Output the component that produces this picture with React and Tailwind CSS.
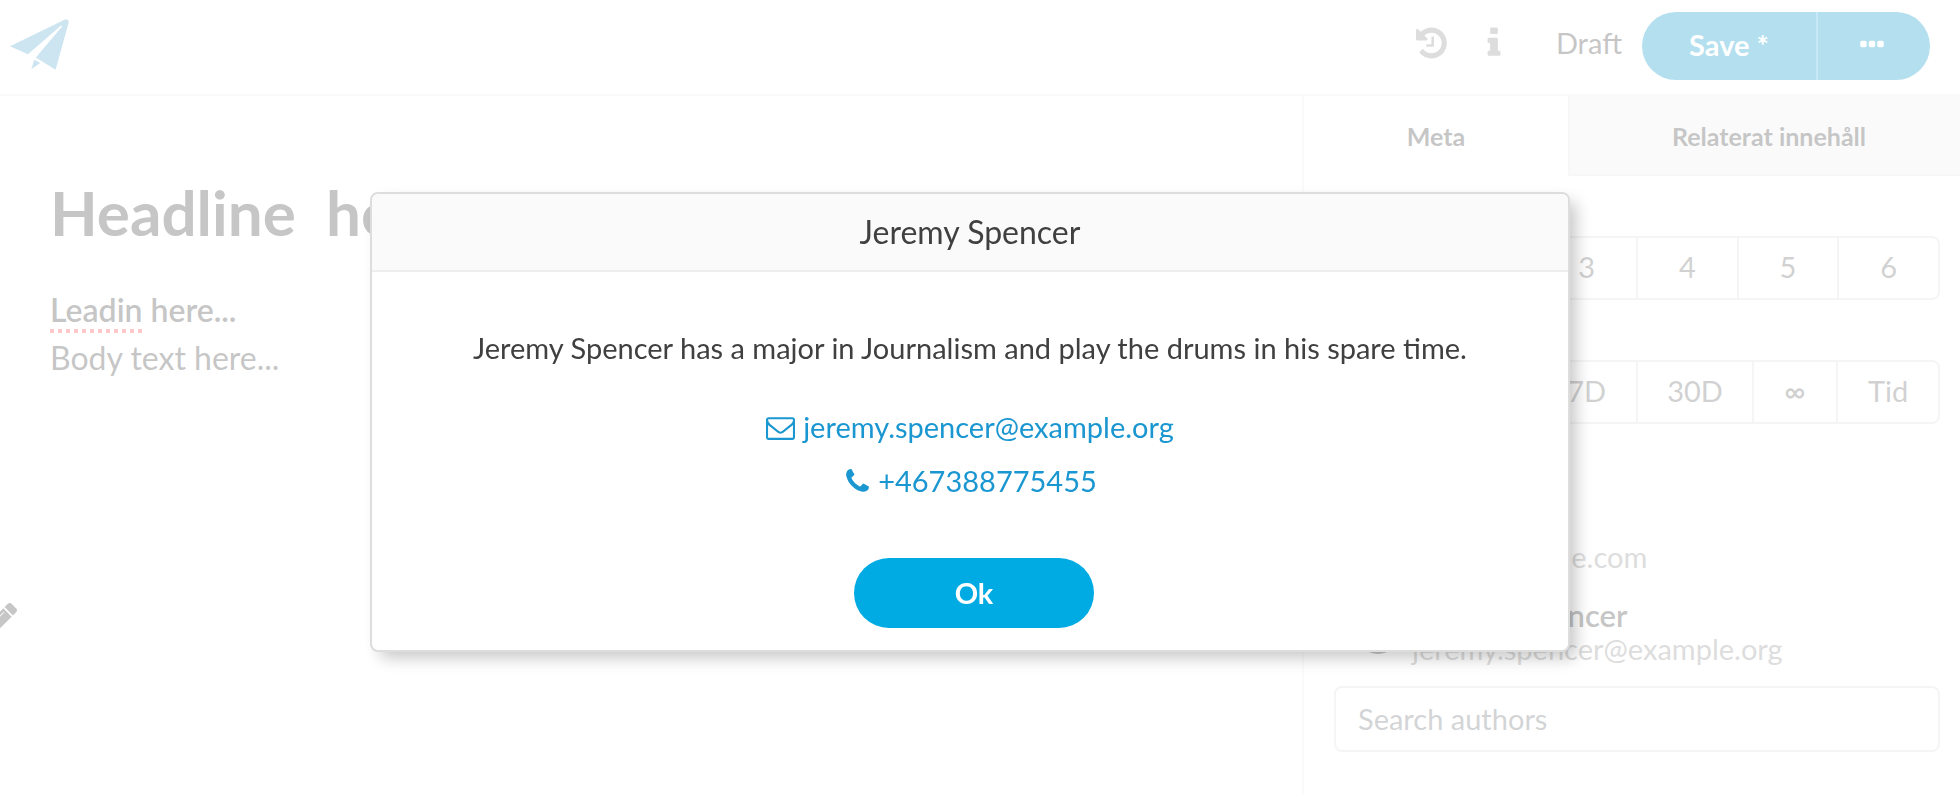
const ICONS = {
  history:
    "M1536 896q0 156-61 298t-164 245-245 164-298 61q-172 0-327-72.5t-264-204.5q-7-10-6.5-22.5t8.5-20.5l137-138q10-9 25-9 16 2 23 12 73 95 179 147t225 52q104 0 198.5-40.5t163.5-109.5 109.5-163.5 40.5-198.5-40.5-198.5-109.5-163.5-163.5-109.5-198.5-40.5q-98 0-188 35.5t-160 101.5l137 138q31 30 14 69-17 40-59 40h-448q-26 0-45-19t-19-45v-448q0-42 40-59 39-17 69 14l130 129q107-101 244.5-156.5t284.5-55.5q156 0 298 61t245 164 164 245 61 298zm-640-288v448q0 14-9 23t-23 9h-320q-14 0-23-9t-9-23v-64q0-14 9-23t23-9h224v-352q0-14 9-23t23-9h64q14 0 23 9t9 23z",
  info: "M1216 1344v128q0 26-19 45t-45 19h-512q-26 0-45-19t-19-45v-128q0-26 19-45t45-19h64v-384h-64q-26 0-45-19t-19-45v-128q0-26 19-45t45-19h384q26 0 45 19t19 45v576h64q26 0 45 19t19 45zm-128-1152v192q0 26-19 45t-45 19h-256q-26 0-45-19t-19-45v-192q0-26 19-45t45-19h256q26 0 45 19t19 45z",
  envelope:
    "M1664 1504v-768q-32 36-69 66-268 206-426 338-51 43-83 67t-86.5 48.5-102.5 24.5h-2q-48 0-102.5-24.5t-86.5-48.5-83-67q-158-132-426-338-37-30-69-66v768q0 13 9.5 22.5t22.5 9.5h1472q13 0 22.5-9.5t9.5-22.5zm0-1051v-24.5l-.5-13-3-12.5-5.5-9-9-7.5-14-2.5h-1472q-13 0-22.5 9.5t-9.5 22.5q0 168 147 284 193 152 401 317 6 5 35 29.5t46 37.5 44.5 31.5 50.5 27.5 43 9h2q20 0 43-9t50.5-27.5 44.5-31.5 46-37.5 35-29.5q208-165 401-317 54-43 100.5-115.5t46.5-131.5zm128-37v1088q0 66-47 113t-113 47h-1472q-66 0-113-47t-47-113v-1088q0-66 47-113t113-47h1472q66 0 113 47t47 113z",
  phone:
    "M1600 1240q0 27-10 70.5t-21 68.5q-21 50-122 106-94 51-186 51-27 0-53-3.5t-57.5-12.5-47-14.5-55.5-20.5-49-18q-98-35-175-83-127-79-264-216t-216-264q-48-77-83-175-3-9-18-49t-20.5-55.5-14.5-47-12.5-57.5-3.5-53q0-92 51-186 56-101 106-122 25-11 68.5-21t70.5-10q14 0 21 3 18 6 53 76 11 19 30 54t35 63.5 31 53.5q3 4 17.5 25t21.5 35.5 7 28.5q0 20-28.5 50t-62 55-62 53-28.5 46q0 9 5 22.5t8.5 20.5 14 24 11.5 19q76 137 174 235t235 174q2 1 19 11.5t24 14 20.5 8.5 22.5 5q18 0 46-28.5t53-62 55-62 50-28.5q14 0 28.5 7t35.5 21.5 25 17.5q25 15 53.5 31t63.5 35 54 30q70 35 76 53 3 7 3 21z",
  ellipsis:
    "M576 736v192q0 40-28 68t-68 28h-192q-40 0-68-28t-28-68v-192q0-40 28-68t68-28h192q40 0 68 28t28 68zm512 0v192q0 40-28 68t-68 28h-192q-40 0-68-28t-28-68v-192q0-40 28-68t68-28h192q40 0 68 28t28 68zm512 0v192q0 40-28 68t-68 28h-192q-40 0-68-28t-28-68v-192q0-40 28-68t68-28h192q40 0 68 28t28 68z",
  pencil:
    "M491 1536l91-91-235-235-91 91v107h128v128h107zm523-928q0-22-22-22-10 0-17 7l-542 542q-7 7-7 17 0 22 22 22 10 0 17-7l542-542q7-7 7-17zm-54-192l416 416-832 832h-416v-416zm683 96q0 53-37 90l-166 166-416-416 166-165q36-38 90-38 53 0 91 38l235 234q37 39 37 91z",
};

function Icon({ name, className }) {
  return (
    <svg viewBox="0 0 1792 1792" fill="currentColor" aria-hidden="true" className={className}>
      <path d={ICONS[name]} />
    </svg>
  );
}

function Header() {
  return (
    <header className="flex h-24 items-start justify-between border-b-2 border-[#eeeeee] pl-2.5 pr-[30px]">
      <a href="#home" aria-label="Home" className="pt-[18px] text-[#55a8cf]">
        <svg viewBox="0 0 60 52" fill="currentColor" aria-hidden="true" className="h-[52px] w-[60px]">
          <path d="M0 28.300 L55.500 1.300 Q58 0.800 58.900 3.800 L45.600 51.800 L25.800 39.500 L52.300 8.200 L51 7.400 L18 36.300 Z" />
          <path d="M24.300 41.700 L30.200 45 L21.300 51.200 Z" />
        </svg>
      </a>
      <div className="flex items-start pt-3">
        <button type="button" aria-label="History" className="mr-6 mt-[13px] text-[#8c8c8c]">
          <Icon name="history" className="size-9" />
        </button>
        <button type="button" aria-label="Information" className="mr-11 mt-[13px] text-[#8c8c8c]">
          <Icon name="info" className="size-9" />
        </button>
        <span className="mr-5 mt-3 text-[29px] leading-[38px] text-[#404040]">Draft</span>
        <div className="flex h-[68px] w-72 overflow-hidden rounded-full bg-[#0094c9] text-white">
          <button type="button" className="w-[174px] pb-0.5 text-[29px] font-bold">
            Save *
          </button>
          <button
            type="button"
            aria-label="More save options"
            className="flex flex-1 items-center justify-center border-l-2 border-[#45b5e4] pb-0.5 pr-1"
          >
            <Icon name="ellipsis" className="size-[30px]" />
          </button>
        </div>
      </div>
    </header>
  );
}

function Editor() {
  return (
    <main className="relative flex-1 pl-[50px] pt-20 text-[#404040]">
      <h1 className="whitespace-pre text-[62px] font-bold leading-[72px]">Headline  here</h1>
      <div className="pt-[38px] text-[32px] leading-[48px]">
        <p className="font-semibold">
          <span className="bg-[repeating-linear-gradient(90deg,#ff4545_0_4px,transparent_4px_8px)] bg-[length:100%_4px] bg-bottom bg-no-repeat pb-1">
            Leadin
          </span>{" "}
          here...
        </p>
        <p>Body text here...</p>
      </div>
      <button type="button" aria-label="Edit" className="absolute -left-4 top-[504px] text-[#404040]">
        <Icon name="pencil" className="size-9" />
      </button>
    </main>
  );
}

function Segments({ label, items, className }) {
  return (
    <div
      role="group"
      aria-label={label}
      className={`flex h-16 divide-x-2 divide-[#dddddd] rounded-lg border-2 border-[#dddddd] text-[29px] text-[#666666] ${className}`}
    >
      {items.map((item) => (
        <button key={item.text} type="button" className={`pb-0.5 ${item.grow}`}>
          {item.text}
        </button>
      ))}
    </div>
  );
}

const NEWS_VALUES = ["1", "2", "3", "4", "5", "6"].map((text) => ({ text, grow: "flex-1" }));

const LIFETIMES = [
  { text: "1D", grow: "flex-1" },
  { text: "3D", grow: "flex-1" },
  { text: "7D", grow: "flex-1" },
  { text: "30D", grow: "w-[116px]" },
  { text: "∞", grow: "w-[84px] font-semibold" },
  { text: "Tid", grow: "w-[100px]" },
];

function Author({ name, email }) {
  return (
    <li className="flex items-end gap-3 pl-[22px] leading-[34px]">
      <span className="mb-3 size-11 rounded-full bg-[#404040]" />
      <div>
        <p className="text-[31px] font-semibold text-[#404040]">{name}</p>
        <p className="text-[29px] text-[#8c8c8c]">{email}</p>
      </div>
    </li>
  );
}

function Sidebar() {
  return (
    <aside className="w-[658px] border-l-2 border-[#eeeeee]">
      <div role="tablist" className="flex h-20 text-[25px] font-bold text-[#404040]">
        <button type="button" role="tab" aria-selected="true" className="w-[264px] pt-0.5">
          Meta
        </button>
        <button
          type="button"
          role="tab"
          aria-selected="false"
          className="flex-1 border-b-2 border-l-2 border-[#e4e4e4] bg-[#efefef] pl-[102px] pt-1 text-left"
        >
          Relaterat innehåll
        </button>
      </div>
      <div className="pl-[30px] pr-5 pt-[60px]">
        <Segments label="News value" items={NEWS_VALUES} className="mb-[60px]" />
        <Segments label="Lifetime" items={LIFETIMES} className="mb-[82px]" />
        <ul className="mb-5 flex flex-col gap-6">
          <Author name="Eva Lind" email="eva@example.com" />
          <Author name="Jeremy Spencer" email="jeremy.spencer@example.org" />
        </ul>
        <input
          type="text"
          aria-label="Search authors"
          placeholder="Search authors"
          className="h-[66px] w-full rounded-lg border-2 border-[#dddddd] px-[22px] pb-0.5 text-[29px] placeholder:text-[#6b7075]"
        />
      </div>
    </aside>
  );
}

function AuthorDialog() {
  return (
    <div className="fixed inset-0 flex items-start justify-center bg-white/70 pr-5 pt-48">
      <section
        role="dialog"
        aria-modal="true"
        aria-labelledby="dialog-title"
        className="w-[1200px] overflow-hidden rounded-lg border-2 border-[#dddddd] bg-white text-center text-[#404040] shadow-[8px_8px_16px_-2px_rgba(0,0,0,0.22)]"
      >
        <h2 id="dialog-title" className="h-[78px] border-b-2 border-[#eeeeee] bg-[#fafafa] text-[32px] leading-[76px]">
          Jeremy Spencer
        </h2>
        <div className="flex flex-col items-center pb-[22px] pt-[54px] text-[29px]">
          <p className="mb-[30px] leading-[44px]">
            Jeremy Spencer has a major in Journalism and play the drums in his spare time.
          </p>
          <a href="mailto:jeremy.spencer@example.org" className="flex items-center gap-2 leading-[54px] text-[#1a96d0]">
            <Icon name="envelope" className="size-[29px]" />
            jeremy.spencer@example.org
          </a>
          <a href="tel:+467388775455" className="flex items-center gap-1.5 leading-[54px] text-[#1a96d0]">
            <Icon name="phone" className="size-[29px]" />
            +467388775455
          </a>
          <button type="button" className="ml-2 mt-[50px] h-[70px] w-60 rounded-full bg-[#00abe4] font-bold text-white">
            Ok
          </button>
        </div>
      </section>
    </div>
  );
}

export default function App() {
  return (
    <div className="flex min-h-screen flex-col bg-white font-[Lato,sans-serif]">
      <Header />
      <div className="flex flex-1">
        <Editor />
        <Sidebar />
      </div>
      <AuthorDialog />
    </div>
  );
}
